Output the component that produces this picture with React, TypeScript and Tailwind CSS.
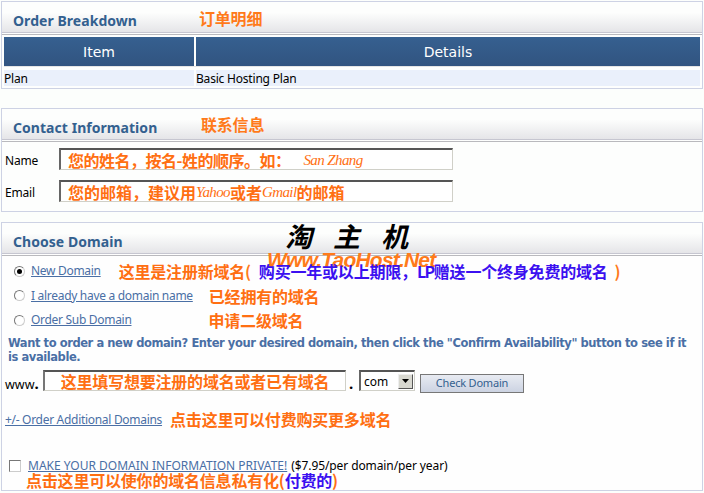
import React from 'react';

const cjk = "font-['Noto_Sans_CJK_SC',sans-serif]";
const latinNote = "font-normal italic text-[15px] tracking-[-0.6px] font-['Liberation_Serif',serif]";

const SectionHeader = ({ title, note, noteClass }: { title: string; note: string; noteClass: string }) => (
    <div className="relative">
        <div className="h-[31px] flex items-end pl-[11px] pb-[2px] bg-gradient-to-b from-[#fdfefd] from-[35%] to-[#e5e5e8] border-b border-[#c6c6d0]">
            <h2 className="text-[14px] leading-[18px] font-bold text-[#33608f] tracking-[0.05px]">{title}</h2>
        </div>
        <div className="h-[2px] border-b border-[#b9b9bd]" />
        <span className={`absolute text-[16px] leading-[18px] font-bold text-[#ff7a1a] ${cjk} ${noteClass}`}>{note}</span>
    </div>
);

const Note = ({ className, children }: { className: string; children: React.ReactNode }) => (
    <span className={`absolute whitespace-nowrap text-[16px] leading-[18px] font-bold text-[#ff6f12] ${cjk} ${className}`}>{children}</span>
);

const TextField = ({ label, children }: { label: string; children: React.ReactNode }) => (
    <div className="flex items-center h-[22px]">
        <span className="w-[57px] pl-[3px] pt-[3px] text-[12px] text-black">{label}</span>
        <div className="w-[394px] h-[22px] flex items-center pl-[7px] border border-[#d0d0c8] border-t-2 border-l-2 border-t-[#555] border-l-[#666] bg-white whitespace-nowrap text-[16px] leading-[18px] font-bold text-[#ff6f12]">
            {children}
        </div>
    </div>
);

const Radio = ({ checked, label, note, gap }: { checked?: boolean; label: string; note: string; gap: string }) => (
    <div className="flex items-center h-[24.5px]">
        <span className="w-[11px] h-[11px] ml-[12px] mr-[6px] rounded-full border border-[#777] border-r-[#ccc] border-b-[#ccc] bg-white flex items-center justify-center">
            {checked && <span className="w-[5px] h-[5px] rounded-full bg-black" />}
        </span>
        <a className="text-[12px] tracking-[-0.3px] text-[#4a6fa5] underline whitespace-nowrap">{label}</a>
        <span className={`text-[16px] font-bold text-[#ff6f12] whitespace-nowrap ${cjk} ${gap}`}>{note}</span>
    </div>
);

export default function App() {
    return (
        <div className="relative w-[704px] h-[493px] overflow-hidden bg-[#fcfefc] px-[1px] pt-[1px] font-['Noto_Sans',Tahoma,sans-serif] text-[12px] tracking-[-0.2px]">
            {/* Order Breakdown */}
            <section className="w-[702px] h-[88px] border border-[#cdd2e4] bg-[#fdfefd]">
                <SectionHeader title="Order Breakdown" note="订单明细" noteClass="left-[197px] top-[7px]" />
                <div className="grid grid-cols-[190px_1fr] gap-x-[2px] px-[2px] pt-[2px]">
                    <div className="h-[29px] bg-gradient-to-b from-[#366090] to-[#315480] text-center text-white text-[14px] leading-[31px] tracking-normal font-['DejaVu_Sans',sans-serif]">Item</div>
                    <div className="h-[29px] bg-gradient-to-b from-[#366090] to-[#315480] text-center text-white text-[14px] leading-[31px] tracking-normal font-['DejaVu_Sans',sans-serif]">Details</div>
                    <div className="col-span-2 h-[4px] border-t border-[#e4e4e4]" />
                    <div className="h-[16px] bg-[#eaf0fb] text-black leading-[17px]">Plan</div>
                    <div className="h-[16px] bg-[#eaf0fb] text-black leading-[17px]">Basic Hosting Plan</div>
                </div>
            </section>

            {/* Contact Information */}
            <section className="w-[702px] h-[104px] mt-[19px] border border-[#cdd2e4] bg-[#fdfefd]">
                <SectionHeader title="Contact Information" note="联系信息" noteClass="left-[199px] top-[6px]" />
                <div className="flex flex-col gap-[10px] pt-[6px]">
                    <TextField label="Name">
                        <span className={`tracking-[-0.5px] ${cjk}`}>您的姓名，按名-姓的顺序。如：</span>
                        <span className={`ml-[13px] ${latinNote}`}>San Zhang</span>
                    </TextField>
                    <TextField label="Email">
                        <span className={`tracking-normal ${cjk}`}>您的邮箱，建议用</span>
                        <span className={latinNote}>Yahoo</span>
                        <span className={`tracking-normal ${cjk}`}>或者</span>
                        <span className={latinNote}>Gmail</span>
                        <span className={`tracking-normal ${cjk}`}>的邮箱</span>
                    </TextField>
                </div>
            </section>

            {/* Choose Domain */}
            <section className="relative w-[702px] h-[269px] mt-[10px] border border-[#cdd2e4] bg-[#fefefe]">
                <SectionHeader title="Choose Domain" note="" noteClass="" />
                <div className="pt-[3px]">
                    <Radio checked label="New Domain" note="这里是注册新域名" gap="ml-[18px]" />
                    <Radio label="I already have a domain name" note="已经拥有的域名" gap="ml-[16px]" />
                    <Radio label="Order Sub Domain" note="申请二级域名" gap="ml-[77px]" />
                </div>
                <p className="px-[6px] pt-[3px] text-[11.5px] leading-[14.5px] font-bold text-[#4a6fa5] font-['DejaVu_Sans',sans-serif] tracking-[-0.43px]">
                    Want to order a new domain? Enter your desired domain, then click the "Confirm Availability" button to see if it is available.
                </p>
                <div className="flex items-center pl-[3px] mt-[5px] h-[22px]">
                    <span className="w-[38px] pt-[6px] text-[12.5px] tracking-normal text-black">www<b className="text-[15px]">.</b></span>
                    <div className={`w-[303px] h-[21px] border border-[#d0d0c8] border-t-2 border-l-2 border-t-[#555] border-l-[#777] bg-white text-center text-[16px] leading-[18px] font-bold text-[#ff6f12] ${cjk}`}>
                        这里填写想要注册的域名或者已有域名
                    </div>
                    <span className="ml-[3px] w-[10px] pt-[6px] text-[15px] font-bold text-black">.</span>
                    <div className="w-[56px] h-[21px] flex items-center border border-[#d0d0c8] border-t-2 border-l-2 border-t-[#555] border-l-[#666] bg-white text-black pl-[3px]">
                        <span className="flex-1 pt-[2px] text-[12px] tracking-normal">com</span>
                        <span className="w-[15px] h-[15px] mr-[1px] flex items-center justify-center bg-[#d8d8d0] border border-[#eee] border-r-[#555] border-b-[#555]">
                            <svg width="7" height="4" viewBox="0 0 7 4"><path d="M0 0h7L3.5 4z" fill="#000" /></svg>
                        </span>
                    </div>
                    <button className="w-[104px] h-[19px] ml-[5px] mt-[5px] border border-[#777] bg-gradient-to-b from-[#e8ebf2] to-[#ccd3e2] text-[11px] text-[#33608f]">Check Domain</button>
                </div>
                <div className="flex items-center h-[24px] mt-[15px] pl-[3px]">
                    <a className="pt-[3px] text-[#4a6fa5] underline whitespace-nowrap tracking-[-0.3px]">+/- Order Additional Domains</a>
                    <span className={`ml-[8px] text-[16px] font-bold text-[#ff6f12] whitespace-nowrap ${cjk}`}>点击这里可以付费购买更多域名</span>
                </div>
                <div className="flex items-center h-[16px] mt-[27px] pl-[7px]">
                    <span className="w-[12px] h-[12px] border border-[#777] border-r-[#ccc] border-b-[#ccc] bg-white" />
                    <a className="ml-[7px] text-[#4a6fa5] underline whitespace-nowrap tracking-normal">MAKE YOUR DOMAIN INFORMATION PRIVATE!</a>
                    <span className="ml-[4px] text-black whitespace-nowrap tracking-[-0.1px]">($7.95/per domain/per year)</span>
                </div>
                <div className={`pl-[24px] -mt-[2px] text-[16px] leading-[17px] font-bold text-[#ff6f12] whitespace-nowrap ${cjk}`}>
                    点击这里可以使你的域名信息私有化(<span className="text-[#3b10f0]">付费的</span>)
                </div>

                {/* watermark and notes drawn over the form */}
                <span className={`absolute left-[283px] top-[-5px] text-[27px] leading-[36px] font-bold italic text-black tracking-[21px] whitespace-nowrap ${cjk}`}>淘主机</span>
                <span className="absolute left-[265px] top-[25px] text-[21px] leading-[24px] font-bold italic text-[#ff7a1a] whitespace-nowrap font-['Liberation_Sans',sans-serif] tracking-[-0.8px]">Www.TaoHost.Net</span>
                <Note className="left-[243px] top-[39px]">
                    <span className="text-[#ff7a1a]">(</span>
                    <span className="ml-[8px] text-[#3b10f0]">购买一年或以上期限，<span className="tracking-[-1.5px]">LP</span>赠送一个终身免费的域名</span>
                    <span className="ml-[7px] text-[#ff7a1a]">)</span>
                </Note>
            </section>
        </div>
    );
}
